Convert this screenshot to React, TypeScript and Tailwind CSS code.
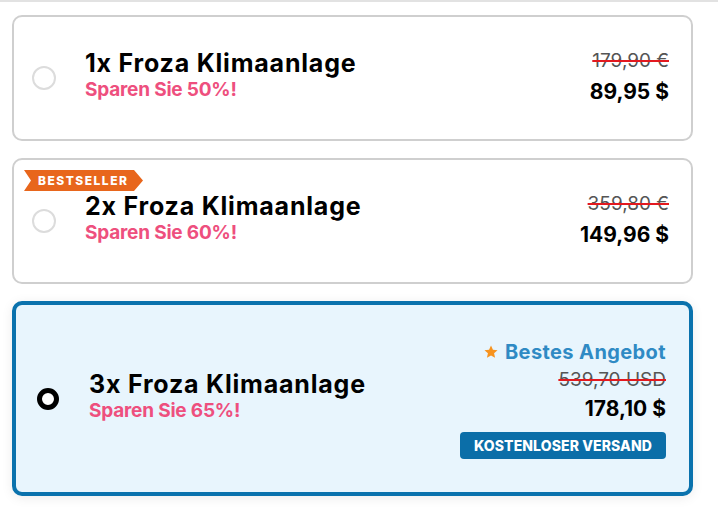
import React from "react";

const font = { fontFamily: "Inter, 'Noto Sans', sans-serif" };

function Radio({ selected }: { selected?: boolean }) {
  if (selected) {
    return <div className="w-[22px] h-[22px] rounded-full border-[5px] border-black bg-white shrink-0" />;
  }
  return <div className="w-[24px] h-[24px] rounded-full border-2 border-[#dcdcdc] bg-white shrink-0" />;
}

function Star() {
  return (
    <svg width="16" height="16" viewBox="0 0 24 24" className="shrink-0">
      <path
        d="M12 2.2l2.9 6.3 6.9.7-5.2 4.6 1.5 6.8L12 17.1l-6.1 3.5 1.5-6.8L2.2 9.2l6.9-.7z"
        fill="#f7931e"
      />
    </svg>
  );
}

function Left({ qty, pct }: { qty: string; pct: string }) {
  return (
    <div className="flex flex-col">
      <div className="text-[25px] leading-[28px] font-bold text-black tracking-[0.8px]">{qty}x Froza Klimaanlage</div>
      <div className="text-[19px] leading-[26px] font-bold text-[#ee4f7e] tracking-[-0.2px]">Sparen Sie {pct}%!</div>
    </div>
  );
}

export default function App() {
  return (
    <div className="w-[718px] h-[516px] bg-white border-t-2 border-[#e2e2e2]" style={font}>
      <div className="ml-3 w-[681px] pt-[13px] flex flex-col gap-[17px]">
        {/* Card 1 */}
        <div className="relative h-[126px] rounded-[10px] border-2 border-[#cfcfcf] bg-white flex items-center pl-[18px] pr-[22px]">
          <div className="flex items-center">
            <Radio />
            <div className="ml-[29px] -mt-[4px]">
              <Left qty="1" pct="50" />
            </div>
          </div>
          <div className="ml-auto flex flex-col items-end -mt-[2px]">
            <div className="text-[19px] leading-[26px] text-[#555] line-through decoration-[#e3191f] decoration-2">179,90 €</div>
            <div className="mt-[4px] text-[21px] leading-[28px] font-bold text-black">89,95 $</div>
          </div>
        </div>

        {/* Card 2 */}
        <div className="relative h-[126px] rounded-[10px] border-2 border-[#cfcfcf] bg-white flex items-center pl-[18px] pr-[22px]">
          <div className="absolute left-[10px] top-[10px] h-[21px] w-[119px] bg-[#e8661c] [clip-path:polygon(0_0,calc(100%-9px)_0,100%_50%,calc(100%-9px)_100%,0_100%,7px_50%)] flex items-center pl-[14px]">
            <span className="text-white text-[12px] font-extrabold tracking-[1.5px] leading-none">BESTSELLER</span>
          </div>
          <div className="flex items-center">
            <Radio />
            <div className="ml-[29px] -mt-[4px]">
              <Left qty="2" pct="60" />
            </div>
          </div>
          <div className="ml-auto flex flex-col items-end -mt-[2px]">
            <div className="text-[19px] leading-[26px] text-[#555] line-through decoration-[#e3191f] decoration-2">359,80 €</div>
            <div className="mt-[4px] text-[21px] leading-[28px] font-bold text-black">149,96 $</div>
          </div>
        </div>

        {/* Card 3 */}
        <div className="relative h-[195px] rounded-[10px] border-4 border-[#0a72ad] bg-[#e8f5fd] shadow-[0_2px_12px_rgba(0,0,0,0.08)] flex items-center pl-[21px] pr-[23px]">
          <div className="flex items-center">
            <Radio selected />
            <div className="ml-[30px] -mt-[4px]">
              <Left qty="3" pct="65" />
            </div>
          </div>
          <div className="ml-auto flex flex-col items-end">
            <div className="flex items-center gap-[6px]">
              <Star />
              <span className="text-[20px] leading-[28px] font-bold text-[#2f8ac4] tracking-[0.4px]">Bestes Angebot</span>
            </div>
            <div className="text-[19px] leading-[28px] text-[#555] line-through decoration-[#e3191f] decoration-2">539,70 USD</div>
            <div className="text-[21px] leading-[30px] font-bold text-black">178,10 $</div>
            <div className="mt-[8px] h-[27px] px-[14px] rounded-[4px] bg-[#0b6ea8] flex items-center">
              <span className="text-white text-[14px] font-extrabold leading-none tracking-[0.1px]">KOSTENLOSER VERSAND</span>
            </div>
          </div>
        </div>
      </div>
    </div>
  );
}
